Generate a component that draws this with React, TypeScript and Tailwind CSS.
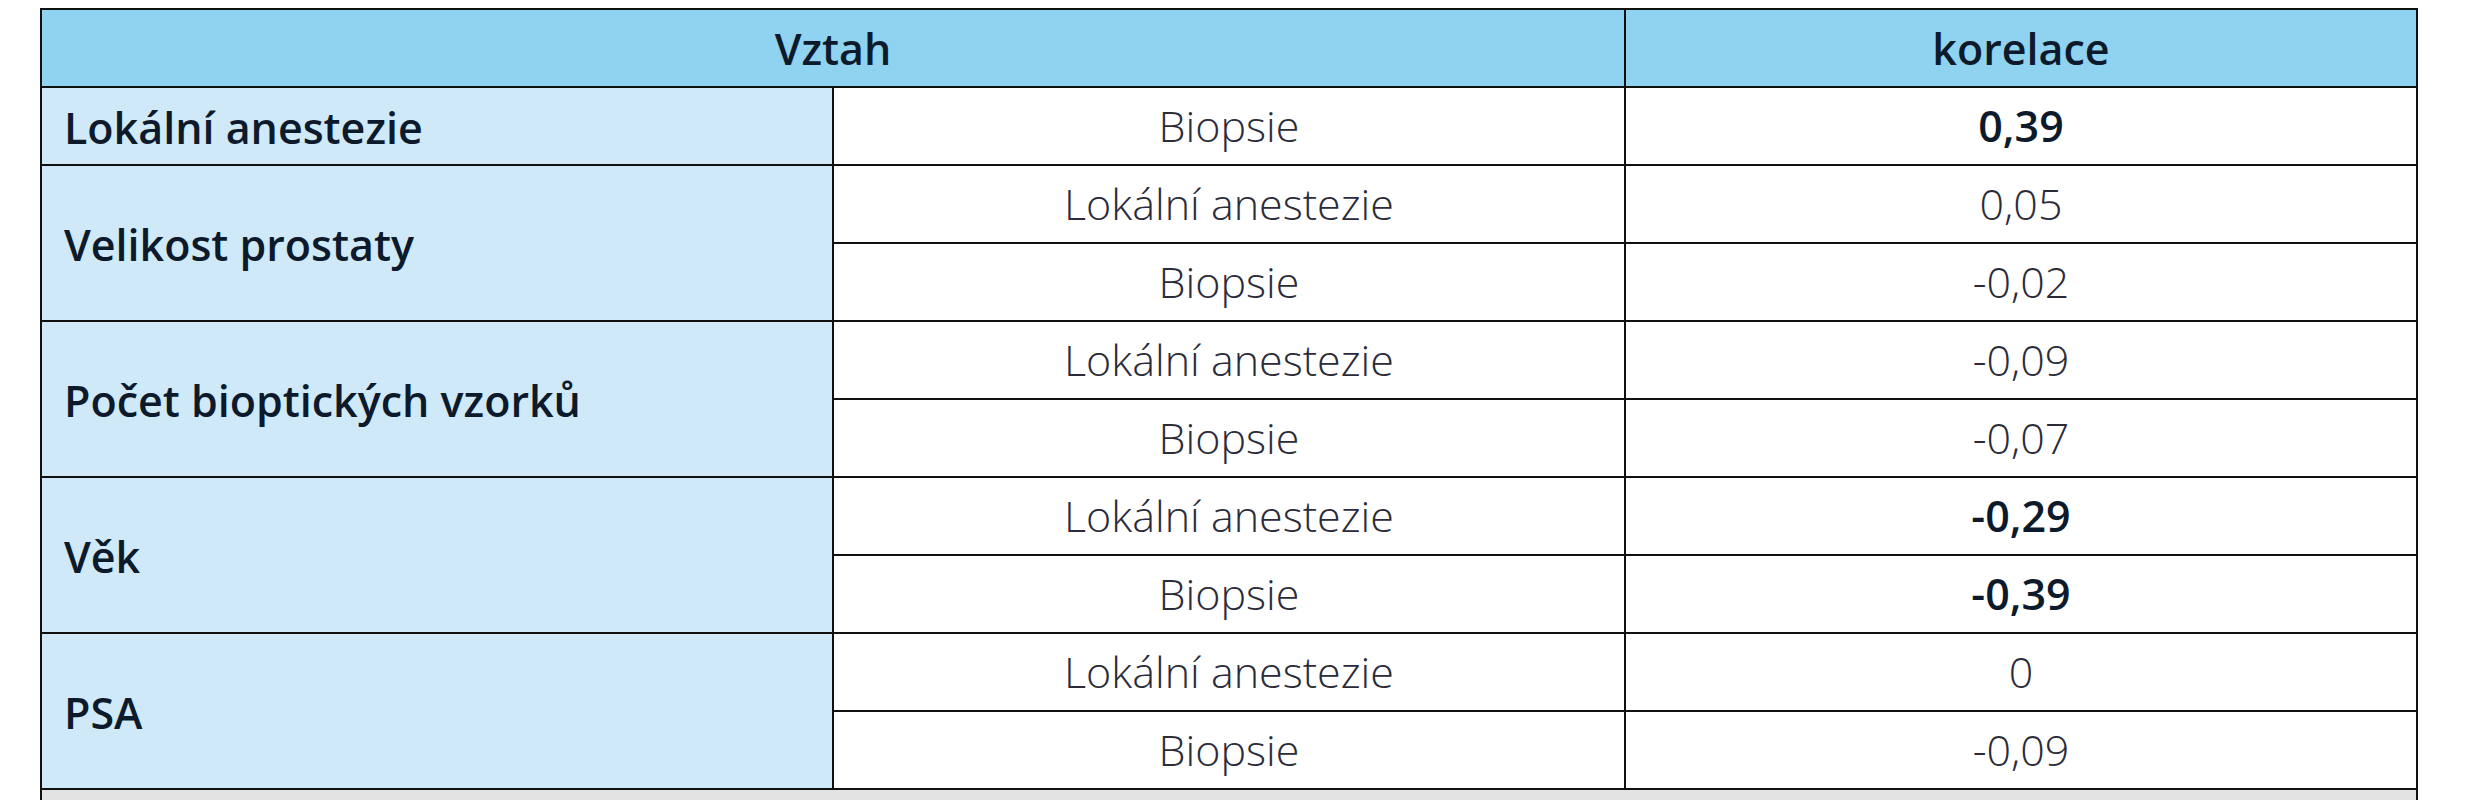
const rows: { label: string; items: { name: string; value: string; bold?: boolean }[] }[] = [
  { label: "Lokální anestezie", items: [{ name: "Biopsie", value: "0,39", bold: true }] },
  {
    label: "Velikost prostaty",
    items: [
      { name: "Lokální anestezie", value: "0,05" },
      { name: "Biopsie", value: "-0,02" },
    ],
  },
  {
    label: "Počet bioptických vzorků",
    items: [
      { name: "Lokální anestezie", value: "-0,09" },
      { name: "Biopsie", value: "-0,07" },
    ],
  },
  {
    label: "Věk",
    items: [
      { name: "Lokální anestezie", value: "-0,29", bold: true },
      { name: "Biopsie", value: "-0,39", bold: true },
    ],
  },
  {
    label: "PSA",
    items: [
      { name: "Lokální anestezie", value: "0" },
      { name: "Biopsie", value: "-0,09" },
    ],
  },
];

export default function App() {
  return (
    <div className="min-h-screen bg-white pl-[40px] pt-[8px] font-['Open_Sans',sans-serif]">
      <table className="w-[2378px] table-fixed border-collapse border-2 border-[#111]">
        <thead>
          <tr className="h-[78px] bg-[#8fd3f0] text-[43px] font-semibold text-[#0d1a2b]">
            <th colSpan={2} className="border-2 border-[#111] pt-[2px] font-semibold">
              Vztah
            </th>
            <th className="border-2 border-[#111] pt-[2px] font-semibold">korelace</th>
          </tr>
        </thead>
        <tbody>
          {rows.map((group) =>
            group.items.map((item, i) => (
              <tr key={group.label + item.name} className="h-[78px]">
                {i === 0 && (
                  <td
                    rowSpan={group.items.length}
                    className="border-2 border-[#111] bg-[#cfe9f8] pt-[4px] pl-[22px] text-[43px] font-semibold text-[#0d1a2b]"
                  >
                    {group.label}
                  </td>
                )}
                <td className="border-2 border-[#111] text-center text-[43px] font-light text-[#2b2b3a]">
                  {item.name}
                </td>
                <td
                  className={
                    item.bold
                      ? "border-2 border-[#111] text-center text-[43px] font-semibold text-[#0d1a2b]"
                      : "border-2 border-[#111] text-center text-[43px] font-light text-[#2b2b3a]"
                  }
                >
                  {item.value}
                </td>
              </tr>
            ))
          )}
          <tr className="h-[80px] bg-[#e3e3e3]">
            <td colSpan={3} className="border-2 border-[#111]"></td>
          </tr>
        </tbody>
      </table>
    </div>
  );
}
